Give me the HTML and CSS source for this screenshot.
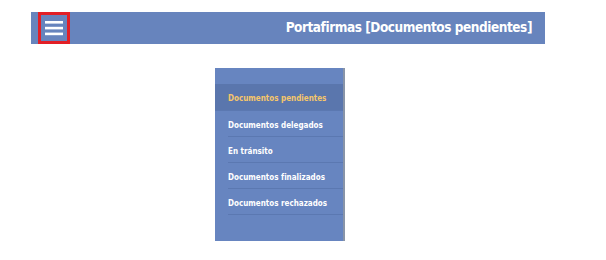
FILE: index.html
```html
<!DOCTYPE html>
<html lang="es">
<head>
<meta charset="utf-8">
<title>Portafirmas</title>
<link rel="stylesheet" href="styles.css">
</head>
<body>
<header class="topbar">
  <button class="menu-btn" aria-label="Menú">
    <svg width="18" height="15" viewBox="0 0 18 15" aria-hidden="true">
      <rect x="0" y="0" width="18" height="2.6" fill="#fff"/>
      <rect x="0" y="5.8" width="18" height="2.6" fill="#fff"/>
      <rect x="0" y="11.6" width="18" height="2.6" fill="#fff"/>
    </svg>
  </button>
  <h1 class="title">Portafirmas [Documentos pendientes]</h1>
</header>
<nav class="side-menu">
  <ul class="menu-list">
    <li class="menu-item active">Documentos pendientes</li>
    <li class="menu-item">Documentos delegados</li>
    <li class="menu-item">En tránsito</li>
    <li class="menu-item">Documentos finalizados</li>
    <li class="menu-item">Documentos rechazados</li>
  </ul>
</nav>
</body>
</html>
```

FILE: styles.css
```css
html, body {
  margin: 0;
  padding: 0;
  background: #fff;
}
body {
  font-family: "DejaVu Sans Condensed", "DejaVu Sans", sans-serif;
}
.topbar {
  margin: 12px 0 0 31px;
  width: 514px;
  height: 32px;
  background: #6784bd;
  display: flex;
  align-items: stretch;
  justify-content: space-between;
  padding-left: 7px;
  padding-right: 13px;
  box-sizing: border-box;
}
.menu-btn {
  width: 32px;
  margin: 0;
  padding: 0;
  border: 3px solid #e21f26;
  background: transparent;
  display: flex;
  align-items: center;
  justify-content: center;
  box-sizing: border-box;
}
.menu-btn svg {
  display: block;
}
.title {
  margin: 0;
  align-self: center;
  color: #fff;
  font-size: 13.5px;
  font-weight: bold;
  letter-spacing: -0.45px;
  line-height: 1;
}
.side-menu {
  margin: 24px 0 0 215px;
  width: 130px;
  height: 173px;
  background: #6785c0;
  box-sizing: border-box;
  padding-top: 16px;
  border-right: 2px solid #8894a8;
  box-shadow: 0 2px 0 #e4e8ef;
}
.menu-list {
  list-style: none;
  margin: 0;
  padding: 0;
}
.menu-item {
  height: 26px;
  box-sizing: border-box;
  padding-left: 13px;
  padding-top: 3px;
  display: flex;
  align-items: center;
  color: #fff;
  font-size: 8px;
  font-weight: bold;
  position: relative;
}
.menu-item::after {
  content: "";
  position: absolute;
  left: 13px;
  right: 0;
  bottom: 0;
  height: 1px;
  background: #5b78b1;
}
.menu-item.active {
  height: 27px;
  padding-top: 1px;
  background: #5a76ad;
  color: #f6c66a;
}
.menu-item.active::after {
  left: 0;
}
```
